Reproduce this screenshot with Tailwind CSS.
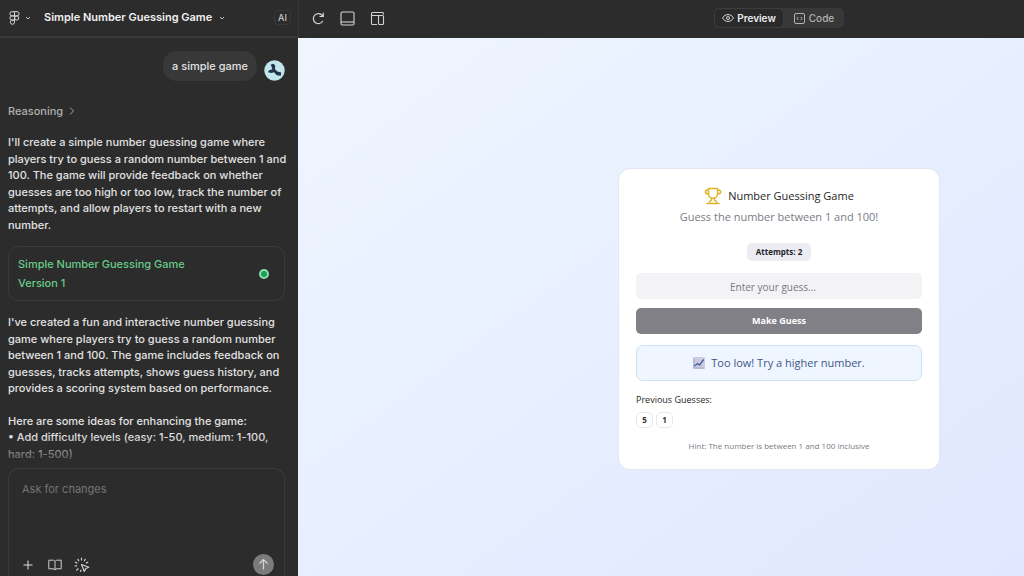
<!DOCTYPE html>
<html lang="en">
<head>
<meta charset="utf-8">
<meta name="viewport" content="width=device-width, initial-scale=1">
<title>Simple Number Guessing Game</title>
<script src="https://cdn.jsdelivr.net/npm/@tailwindcss/browser@4"></script>
</head>
<body class="flex h-screen overflow-hidden bg-[#2c2c2c] font-['Inter',sans-serif] text-[11px] font-medium text-[#e2e2e2]">

<aside class="flex w-[298px] shrink-0 flex-col">
  <header class="flex h-[38px] shrink-0 items-center border-b-2 border-[#393939] pr-[7px] pb-px pl-[9px]">
    <button class="flex items-center gap-[5px]" aria-label="Main menu">
      <svg class="h-[14px] w-[11px]" viewBox="0 0 11 14" fill="none" stroke="#d4d4d4" stroke-width="1"><path d="M5.5 .7H3A2.1 2.1 0 0 0 3 4.9H5.5ZM5.5 .7H8A2.1 2.1 0 0 1 8 4.9H5.5ZM5.5 4.9H3A2.1 2.1 0 0 0 3 9.1H5.5ZM5.5 9.1H3A2.1 2.1 0 1 0 5.5 11.2Z"/><circle cx="7.7" cy="7" r="2.1"/></svg>
      <svg class="h-[6px] w-[6px]" viewBox="0 0 6 6" fill="none" stroke="#c4c4c4" stroke-width="1"><path d="M1 2l2 2 2-2"/></svg>
    </button>
    <button class="ml-[13px] flex items-center gap-[7px]">
      <span class="text-[11px] font-semibold text-[#f0f0f0]">Simple Number Guessing Game</span>
      <svg class="h-[6px] w-[6px]" viewBox="0 0 6 6" fill="none" stroke="#c4c4c4" stroke-width="1"><path d="M1 2l2 2 2-2"/></svg>
    </button>
    <span class="ml-auto flex h-[15px] w-[17px] items-center justify-center rounded-sm border border-[#383838] text-[9px] text-[#c8c8c8]">AI</span>
  </header>

  <div class="relative min-h-0 flex-1 overflow-hidden px-2 pt-[13px]">
    <div class="flex items-start justify-end gap-[7px] pr-[5px]">
      <p class="flex h-[30px] items-center rounded-[14px] bg-[#383838] px-[9px]">a simple game</p>
      <svg class="mt-[9px] h-[21px] w-[21px]" viewBox="0 0 21 21" role="img" aria-label="Your avatar"><circle cx="10.5" cy="10.5" r="10.2" fill="#c3e6ed"/><path d="M6.800 4.500L9.200 3.800 11.200 5.200 11 9.200 13.400 11.400 17.200 12.400 16.800 15.800 12.800 15.200 10 12.200 7.200 13 4 12.200 5 10.200 8.400 9.200Z" fill="#203349"/></svg>
    </div>

    <button class="mt-[21px] flex h-[18px] items-center gap-[6px] text-[#b0b0b0]">Reasoning
      <svg class="h-[8px] w-[6px]" viewBox="0 0 6 8" fill="none" stroke="#a0a0a0" stroke-width="1"><path d="M1 .5L4.500 4 1 7.500"/></svg>
    </button>

    <p class="mt-[14px] leading-normal">I'll create a simple number guessing game where players try to guess a random number between 1 and 100. The game will provide feedback on whether guesses are too high or too low, track the number of attempts, and allow players to restart with a new number.</p>

    <button class="mt-[13px] flex h-[55px] w-[277px] items-center justify-between rounded-[10px] border border-[#3b3b3b] pr-[15px] pl-[9px] text-left text-[#68cb89]">
      <span class="flex flex-col gap-[3px] leading-normal"><span>Simple Number Guessing Game</span><span>Version 1</span></span>
      <span class="h-[10px] w-[10px] rounded-full border-2 border-[#8de0ac] bg-[#18a158]"></span>
    </button>

    <p class="mt-[13px] leading-normal">I've created a fun and interactive number guessing game where players try to guess a random number between 1 and 100. The game includes feedback on guesses, tracks attempts, shows guess history, and provides a scoring system based on performance.</p>
    <p class="mt-4 leading-normal">Here are some ideas for enhancing the game:<br>• Add difficulty levels (easy: 1-50, medium: 1-100, hard: 1-500)</p>
    <div class="absolute inset-x-0 bottom-0 h-[32px] bg-linear-to-b from-[#2c2c2c]/0 to-[#2c2c2c]"></div>
  </div>

  <form class="mr-[13px] ml-2 flex h-[108px] shrink-0 flex-col rounded-t-[11px] border border-b-0 border-[#3b3b3b] pr-[10px] pl-[13px]">
    <textarea aria-label="Ask for changes" placeholder="Ask for changes" class="min-h-0 flex-1 resize-none pt-[12px] font-normal outline-none placeholder:text-[#747474]"></textarea>
    <div class="flex h-[23px] items-center">
      <button type="button" aria-label="Add"><svg class="h-[12px] w-[12px]" viewBox="0 0 12 12" stroke="#e0e0e0" stroke-width="1"><path d="M6 1.500v9M1.500 6h9"/></svg></button>
      <button type="button" aria-label="Library" class="ml-[14px]"><svg class="h-[12px] w-[14px]" viewBox="0 0 14 12" fill="none" stroke="#d0d0d0" stroke-width="1" stroke-linejoin="round"><path d="M7 2.300C6.300 1.300 5.300 1.200 4.500 1.200H.8V9.800H5C6 9.800 6.600 10.200 7 11 7.400 10.200 8 9.800 9 9.800H13.200V1.200H9.500C8.700 1.200 7.700 1.300 7 2.300ZM7 2.300V11"/></svg></button>
      <button type="button" aria-label="Point and edit" class="ml-[12px]"><svg class="h-[16px] w-[16px]" viewBox="0 0 16 16" fill="none" stroke="#d0d0d0" stroke-width="1.200" stroke-linecap="round" stroke-linejoin="round"><path d="M7.500 7.500L14.800 10.300 11.800 11.500 10.300 14.500ZM7.500 1.200V3M3.900 2.300L4.700 3.800M11.200 2.300L10.400 3.800M1.400 5.200L2.800 5.900M13.800 5.200L12.400 5.900M1 9L2.600 8.800M2.700 13L4.100 11.800M6.600 14.500L6.900 13.100"/></svg></button>
      <button aria-label="Send" class="ml-auto flex h-[21px] w-[21px] items-center justify-center rounded-full bg-[#7b7b7b]"><svg class="h-[13px] w-[13px]" viewBox="0 0 13 13" fill="none" stroke="#d6d6d6" stroke-width="1.200"><path d="M6.500 11.500V1.500M2.500 5.500L6.500 1.500l4 4"/></svg></button>
    </div>
  </form>
</aside>

<main class="flex min-w-0 flex-1 flex-col">
  <header class="flex h-[38px] shrink-0 items-center border-l border-[#383838] pb-[2px]">
    <div class="flex w-[235px] shrink-0 items-center gap-[15px] pl-[12px]">
      <button aria-label="Reload"><svg class="h-[15px] w-[14px]" viewBox="0 0 14 15" fill="none" stroke="#d4d4d4" stroke-width="1.200"><path d="M11.800 10A5 5 0 1 1 11.300 4.500L12 5.300M12.300 1.800V5.500H8.500"/></svg></button>
      <button aria-label="Toggle console"><svg class="h-[15px] w-[15px]" viewBox="0 0 15 15" fill="none" stroke="#d4d4d4" stroke-width="1.100"><rect x="1" y="1" width="13" height="13" rx="1.500"/><path d="M1 11h13"/></svg></button>
      <button aria-label="Device size"><svg class="h-[15px] w-[15px]" viewBox="0 0 15 15" fill="none" stroke="#d4d4d4" stroke-width="1.100"><path d="M7 13.500H2.500Q1.500 13.500 1.500 12.500V2.500Q1.500 1.500 2.500 1.500H12.500Q13.500 1.500 13.500 2.500V3.500M1.500 4.500H9"/><rect x="8.500" y="4.500" width="5" height="9" rx="1"/></svg></button>
    </div>
    <div class="flex flex-1 justify-center">
      <div class="flex h-[20px] rounded-[5px] bg-[#383838] text-[10px]">
        <button class="flex w-[70px] items-center justify-center gap-[3px] rounded-[5px] border border-[#3d3d3d] bg-[#2a2a2a] font-semibold text-[#ececec]"><svg class="h-[10px] w-[12px]" viewBox="0 0 12 10" fill="none" stroke="#d8d8d8" stroke-width="1"><path d="M.6 5C2.900 .4 9.100 .4 11.400 5 9.100 9.600 2.900 9.600 .6 5Z"/><circle cx="6" cy="5" r="1.500"/></svg>Preview</button>
        <button class="flex w-[60px] items-center justify-center gap-[4px] text-[#b2b2b2]"><svg class="h-[11px] w-[11px]" viewBox="0 0 11 11" fill="none" stroke="#b2b2b2" stroke-width="1"><rect x=".5" y=".5" width="10" height="10" rx="1.500"/><path d="M4.200 4L3.100 5.500 4.200 7M6.800 4L7.900 5.500 6.800 7"/></svg>Code</button>
      </div>
    </div>
  </header>

  <div class="flex flex-1 items-start justify-center bg-linear-to-br from-[#eff6ff] to-[#e0e7ff] pt-[130px] pl-[236px] font-['Open_Sans','Noto_Sans',sans-serif] font-normal">
    <section class="flex w-[322px] flex-col rounded-[12px] border border-[#e2e7f1] bg-white px-[17px] pt-[18px] pb-[16px] text-[#1f1f1f]">
      <h1 class="flex h-[18px] items-center justify-center gap-[6px] text-[11px]">
        <svg class="h-[18px] w-[18px]" viewBox="0 0 24 24" fill="none" stroke="#dfb42b" stroke-width="2" stroke-linecap="round" stroke-linejoin="round"><path d="M6 9H4.500a2.500 2.500 0 0 1 0-5H6M18 9h1.500a2.500 2.500 0 0 0 0-5H18M4 22h16M10 14.660V17c0 .55-.47.98-.97 1.210C7.850 18.750 7 20.240 7 22M14 14.660V17c0 .55.47.98.97 1.210C16.150 18.750 17 20.240 17 22M18 2H6v7a6 6 0 0 0 12 0V2Z"/></svg>
        Number Guessing Game</h1>
      <p class="mt-[2px] text-center text-[11px] leading-[20px] text-[#7b7b85]">Guess the number between 1 and 100!</p>
      <span class="mt-[16px] flex h-[18px] items-center self-center rounded-[5px] bg-[#ecedf2] px-[9px] text-[8px] font-bold text-[#1d1d2b]">Attempts: 2</span>
      <input aria-label="Your guess" placeholder="Enter your guess..." class="mt-[12px] h-[26px] rounded-[5px] bg-[#f3f3f5] pt-px pr-[12px] text-center text-[10px] outline-none placeholder:text-[#77777f]">
      <button class="mt-[9px] h-[26px] rounded-[5px] bg-[#818087] text-[9px] font-bold text-white">Make Guess</button>
      <div role="status" class="mt-[11px] flex h-[36px] items-center justify-center gap-[6px] rounded-[7px] border border-[#cfe0f5] bg-[#eff6ff] text-[11px] text-[#3d5689]">
        <svg class="h-[12px] w-[12px]" viewBox="0 0 12 12" fill="none"><path fill="#d1cee4" d="M0 0h12v12H0z"/><path d="M0 4h12M0 8h12M4 0v12M8 0v12" stroke="#bcbdd6" stroke-width=".5"/><path d="M1 1v10h10" stroke="#9a9bbd" stroke-width=".8"/><path d="M1.500 9L4.500 6.500 6.500 8 10.800 2.500" stroke="#476298" stroke-width="1.300"/></svg>
        Too low! Try a higher number.</div>
      <h2 class="mt-[12px] text-[9px] leading-[14px]">Previous Guesses:</h2>
      <ul class="mt-[5px] flex gap-[3px] text-[8px] font-bold text-[#333]">
        <li class="flex h-[16px] w-[17px] items-center justify-center rounded-[5px] border border-[#e8e8e8]">5</li>
        <li class="flex h-[16px] w-[17px] items-center justify-center rounded-[5px] border border-[#e8e8e8]">1</li>
      </ul>
      <p class="mt-[11px] text-center text-[8px] leading-[14px] text-[#7b7b85]">Hint: The number is between 1 and 100 inclusive</p>
    </section>
  </div>
</main>
</body>
</html>
